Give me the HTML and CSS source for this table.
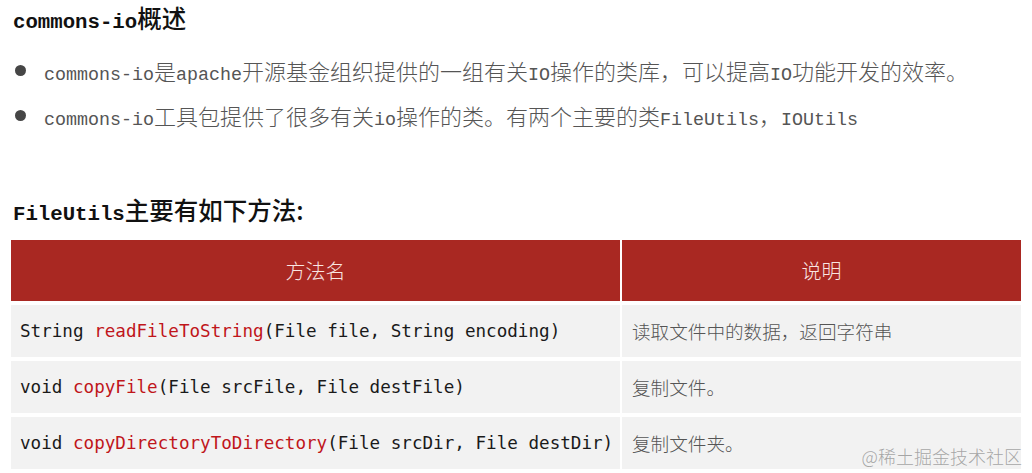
FILE: index.html
```html
<!DOCTYPE html>
<html lang="zh-CN">
<head>
<meta charset="utf-8">
<title>commons-io概述</title>
<link rel="stylesheet" href="styles.css">
</head>
<body>
<main class="page">
  <h1 class="title"><code>commons-io</code>概述</h1>
  <ul class="bullets">
    <li><code>commons-io</code>是<code>apache</code>开源基金组织提供的一组有关<code>IO</code>操作的类库，可以提高<code>IO</code>功能开发的效率。</li>
    <li><code>commons-io</code>工具包提供了很多有关<code>io</code>操作的类。有两个主要的类<code>FileUtils</code>，<code>IOUtils</code></li>
  </ul>
  <h2 class="title sub"><code>FileUtils</code>主要有如下方法:</h2>
  <div class="table">
    <div class="th">方法名</div>
    <div class="th">说明</div>
    <div class="td code">String <span class="fn">readFileToString</span>(File file, String encoding)</div>
    <div class="td desc">读取文件中的数据，返回字符串</div>
    <div class="td code">void <span class="fn">copyFile</span>(File srcFile, File destFile)</div>
    <div class="td desc">复制文件。</div>
    <div class="td code">void <span class="fn">copyDirectoryToDirectory</span>(File srcDir, File destDir)</div>
    <div class="td desc">复制文件夹。</div>
  </div>
  <div class="watermark">@稀土掘金技术社区</div>
</main>
</body>
</html>
```

FILE: styles.css
```css
html, body {
  margin: 0;
  padding: 0;
  background: #ffffff;
}
.page {
  position: relative;
  width: 1032px;
  height: 473px;
  padding: 0 11px;
  box-sizing: border-box;
  font-family: "Noto Sans CJK SC", sans-serif;
  overflow: hidden;
}
.title {
  margin: 0;
  padding-left: 2px;
  height: 36px;
  line-height: 36px;
  font-size: 24.5px;
  font-weight: 500;
  color: #111;
}
.title code {
  font-family: "Liberation Mono", monospace;
  font-size: 20.7px;
  font-weight: 700;
}
.sub {
  margin-top: 54px;
}
.bullets {
  list-style: none;
  margin: 12px 0 0 0;
  padding: 0;
}
.bullets li {
  position: relative;
  height: 45px;
  line-height: 45px;
  padding-left: 33px;
  font-size: 22px;
  font-weight: 300;
  color: #555;
  white-space: nowrap;
}
.bullets li::before {
  content: "";
  position: absolute;
  left: 4px;
  top: 17px;
  width: 11px;
  height: 11px;
  border-radius: 50%;
  background: #464646;
}
.bullets code {
  font-family: "Liberation Mono", monospace;
  font-size: 18.33px;
  font-weight: 400;
}
.table {
  margin-top: 12px;
  display: grid;
  grid-template-columns: 609px 399px;
  grid-template-rows: 61px 52px 52px 52px;
  column-gap: 2px;
  row-gap: 4px;
}
.th {
  background: #a92822;
  color: #f9e6e2;
  font-size: 20px;
  font-weight: 300;
  line-height: 61px;
  text-align: center;
}
.td {
  background: #f2f2f2;
  line-height: 52px;
  white-space: nowrap;
}
.code {
  padding-left: 9px;
  font-family: "DejaVu Sans Mono", monospace;
  font-size: 17.6px;
  color: #1a1a1a;
}
.fn {
  color: #c0161b;
}
.desc {
  padding-left: 10px;
  font-size: 18.6px;
  font-weight: 300;
  color: #555;
}
.watermark {
  position: absolute;
  right: 10px;
  bottom: 5px;
  font-size: 18px;
  line-height: 24px;
  font-weight: 300;
  color: rgba(140, 140, 140, 0.75);
}
```
